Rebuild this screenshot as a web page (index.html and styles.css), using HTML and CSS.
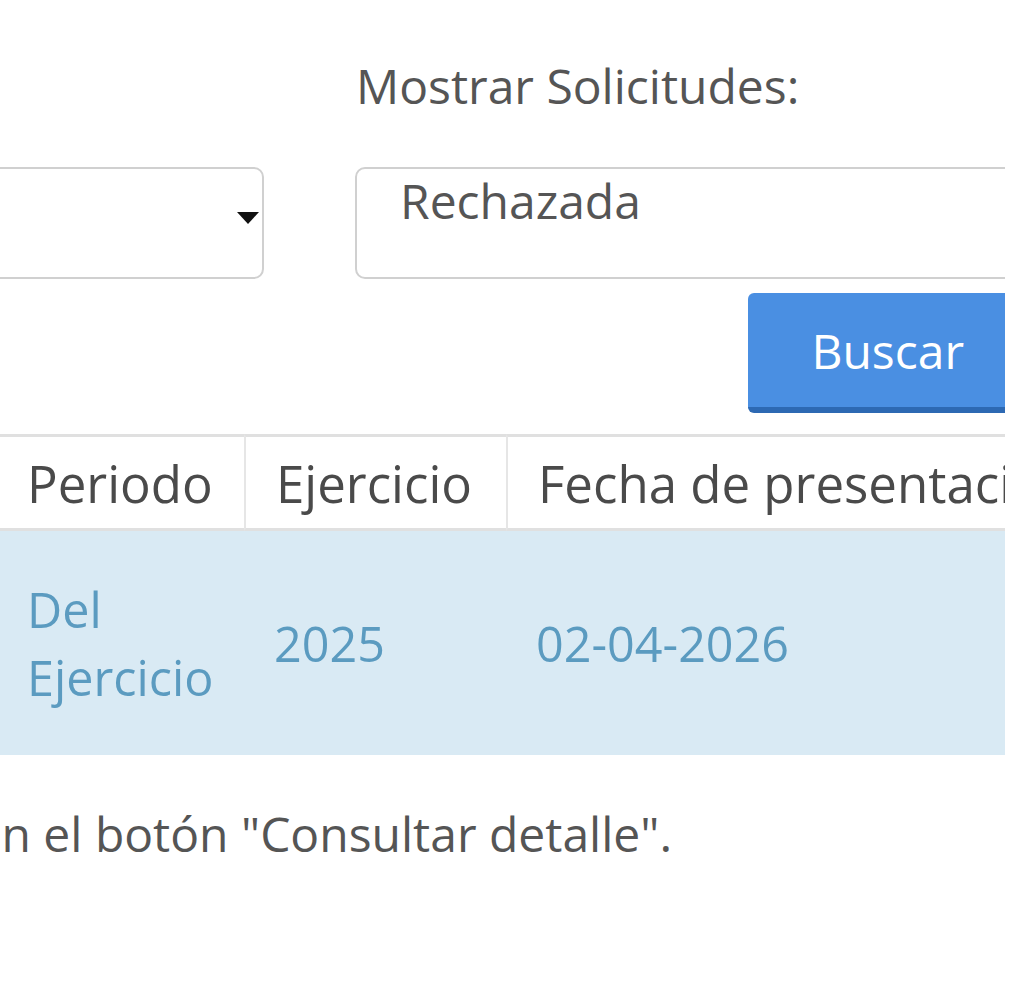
FILE: index.html
```html
<!DOCTYPE html>
<html lang="es">
    <head>
        <meta charset="UTF-8" />
        <meta name="viewport" content="width=device-width, initial-scale=1.0" />
        <title>Consulta de solicitudes</title>
        <link rel="stylesheet" href="styles.css">
    </head>
    <body>
        <div class="crop">
            <div class="filters">
                <div class="field">
                    <div class="select select-left">
                        <span class="caret"></span>
                    </div>
                </div>
                <div class="field">
                    <label class="field-label">Mostrar Solicitudes:</label>
                    <div class="select select-right">Rechazada</div>
                </div>
            </div>

            <div class="actions">
                <button class="btn-buscar" type="button">Buscar</button>
            </div>

            <table class="results">
                <colgroup>
                    <col class="col-periodo">
                    <col class="col-ejercicio">
                    <col class="col-fecha">
                </colgroup>
                <thead>
                    <tr>
                        <th>Periodo</th>
                        <th>Ejercicio</th>
                        <th>Fecha de presentación</th>
                    </tr>
                </thead>
                <tbody>
                    <tr class="row-info">
                        <td>Del Ejercicio</td>
                        <td>2025</td>
                        <td>02-04-2026</td>
                    </tr>
                </tbody>
            </table>

            <div class="note-row">
                <p class="note">Para revisar una solicitud, dé clic en el botón "Consultar detalle".</p>
            </div>
        </div>
    </body>
</html>
```

FILE: styles.css
```css
* {
    margin: 0;
    padding: 0;
    box-sizing: border-box;
}
body {
    background-color: #fff;
    font-family: "Open Sans", "Noto Sans", sans-serif;
    font-size: 48px;
    line-height: 68px;
    color: #555;
    overflow: hidden;
}
.crop {
    width: 1005px;
    height: 1008px;
    overflow: hidden;
}

/* filtros */
.filters {
    display: grid;
    grid-template-columns: 264px 1fr;
    column-gap: 91px;
    align-items: end;
    padding-top: 52px;
}
.field-label {
    display: block;
    margin-bottom: 47px;
    padding-left: 1px;
    color: #555;
}
.select {
    height: 112px;
    border: 2px solid #d0d0d0;
    border-radius: 10px;
    background-color: #fff;
    line-height: 64px;
    color: #555;
}
.select-left {
    margin-left: -40px;
    display: flex;
    justify-content: flex-end;
    align-items: center;
    padding: 0 3px 10px 0;
}
.select-right {
    margin-right: -40px;
    padding-left: 43px;
}
.caret {
    width: 0;
    height: 0;
    border-left: 11px solid transparent;
    border-right: 11px solid transparent;
    border-top: 12px solid #111;
}

/* boton */
.actions {
    display: flex;
    justify-content: flex-end;
    margin-top: 14px;
    margin-right: -21px;
}
.btn-buscar {
    font-family: inherit;
    font-size: 48px;
    line-height: 68px;
    color: #fff;
    background-color: #4a8fe2;
    border: none;
    border-bottom: 6px solid #2d69b3;
    border-radius: 6px;
    padding: 24px 62px 22px 63px;
    cursor: pointer;
}

/* tabla */
.results {
    margin-top: 21px;
    width: 1300px;
    table-layout: fixed;
    border-collapse: separate;
    border-spacing: 0;
}
.col-periodo {
    width: 244px;
}
.col-ejercicio {
    width: 262px;
}
.col-fecha {
    width: 794px;
}
.results th {
    font-size: 51px;
    font-weight: 400;
    text-align: left;
    white-space: nowrap;
    color: #4a4a4a;
    padding: 12px 30px 11px;
    border-top: 3px solid #e0e0e0;
    border-bottom: 3px solid #e0e0e0;
}
.results th + th {
    border-left: 2px solid #e6e6e6;
}
.results td {
    font-size: 48.5px;
    padding: 44px 30px;
    vertical-align: middle;
}
.results th:first-child,
.results td:first-child {
    padding-left: 27px;
    padding-right: 14px;
}
.row-info td {
    background-color: #d9eaf4;
    color: #5b9bc0;
}

/* nota */
.note-row {
    display: flex;
    justify-content: flex-end;
    width: 672px;
    margin-top: 45px;
}
.note {
    white-space: nowrap;
    color: #555;
}
```
